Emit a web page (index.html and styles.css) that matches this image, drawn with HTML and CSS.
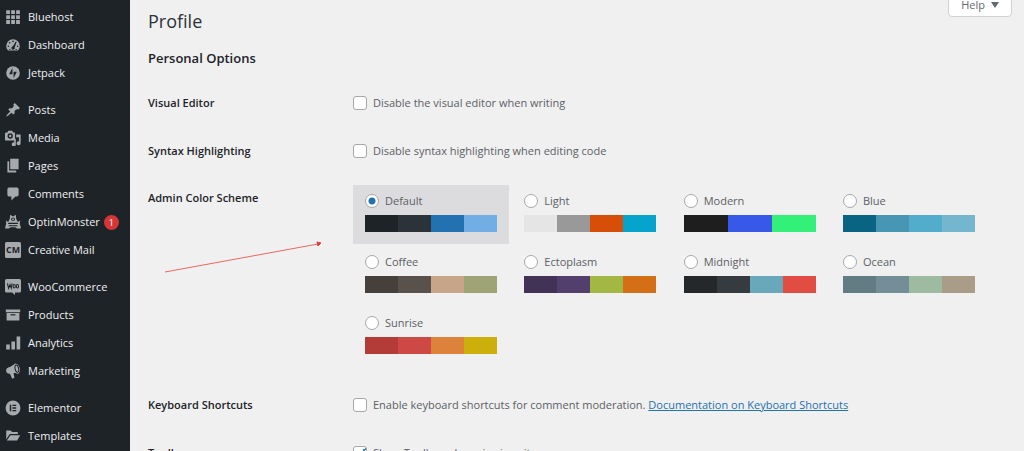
FILE: index.html
```
<!DOCTYPE html>
<html lang="en">

<head>
  <meta charset="UTF-8">
  <meta name="viewport" content="width=device-width, initial-scale=1.0">
  <title>Profile</title>
  <link rel="stylesheet" href="styles.css">
</head>

<body>
  <div class="wrap">
    <nav class="menu">
      <ul class="menu-group">
        <li><a href="#"><svg viewBox="0 0 20 20"><path d="M1.500 1.500h4.700v4.700H1.500zM7.700 1.500h4.700v4.700H7.700zM13.900 1.500h4.700v4.700h-4.700zM1.500 7.700h4.700v4.700H1.500zM7.700 7.700h4.700v4.700H7.700zM13.900 7.700h4.700v4.700h-4.700zM1.500 13.900h4.700v4.700H1.500zM7.700 13.900h4.700v4.700H7.700zM13.900 13.900h4.700v4.700h-4.700z"/></svg>Bluehost</a></li>
        <li><a href="#"><svg viewBox="0 0 20 20"><path d="M3.800 17h12.400c1.300-1.500 2.300-3.600 2.300-5.600A8.500 8.500 0 0 0 1.500 11.400c0 2 1 4.100 2.300 5.600z"/><g class="cut"><circle cx="10" cy="5.500" r="1"/><circle cx="5.800" cy="7.300" r="1"/><circle cx="4.200" cy="11.500" r="1"/><circle cx="15.800" cy="11.500" r="1"/><path d="M13.500 5.500l1 .6-2.300 6.700a2.200 2.200 0 1 1-2.300-1.300zM5 15h2v1H5zM13 15h2v1h-2z"/></g></svg>Dashboard</a></li>
        <li><a href="#"><svg viewBox="0 0 20 20"><circle cx="10" cy="10" r="8.500"/><path class="cut" d="M9.300 3.500v8H5.200zM10.700 16.500v-8h4.100z"/></svg>Jetpack</a></li>
      </ul>
      <ul class="menu-group">
        <li><a href="#"><svg viewBox="0 0 20 20"><path d="M10.440 3.020l1.820-1.820 6.360 6.350-1.830 1.820c-1.050-.680-2.480-.570-3.410.360l-.750.750c-.920.930-1.040 2.350-.350 3.410l-1.830 1.820-2.410-2.410-2.800 2.790c-.420.420-3.380 2.710-3.800 2.290s1.860-3.390 2.280-3.810l2.790-2.790L4.100 9.360l1.830-1.820c1.050.690 2.480.570 3.400-.360l.750-.750c.930-.920 1.050-2.350.360-3.410z"/></svg>Posts</a></li>
        <li><a href="#"><svg viewBox="0 0 20 20"><path d="M1 3h2l1-2h5l1 2h2.500v10H0V4zM14 5.500h5.500v11a2.500 2.500 0 1 1-2-2.300V9H14zM11.500 14v-3h2v7A2.500 2.500 0 1 1 11.500 15.500z"/><circle class="cut" cx="6.500" cy="7.500" r="3.300"/><circle cx="6.500" cy="7.500" r="1.500"/></svg>Media</a></li>
        <li><a href="#"><svg viewBox="0 0 20 20"><path d="M6.500 1H17v13H6.500zM3 4h2.200v11.500H14V18H3z"/></svg>Pages</a></li>
        <li><a href="#"><svg viewBox="0 0 20 20"><path d="M5 2h10a2 2 0 0 1 2 2v7a2 2 0 0 1-2 2h-2l-5 5v-5H5a2 2 0 0 1-2-2V4a2 2 0 0 1 2-2z"/></svg>Comments</a></li>
        <li><a href="#"><svg viewBox="0 0 20 20"><path d="M6 6l.5-5L10 3l3.500-2 .5 5 2 4 3-2-.5 4 1.500 6h-5l-2-1.500h-6L5 18H0l1.500-6L1 8l3 2z"/><path class="cut" d="M7.500 6.500a2.500 2 0 0 1 5 0 2.500 2 0 0 1-5 0zM4.500 11h11l1 1.500h-13zM5 14h10l1 1.300H4z"/><circle cx="10" cy="6.500" r="1.100"/></svg>OptinMonster<span class="badge">1</span></a></li>
        <li><a href="#"><svg viewBox="0 0 20 20"><rect width="20" height="20" rx="2"/><text class="cut cm" x="10" y="14" text-anchor="middle">CM</text></svg>Creative Mail</a></li>
      </ul>
      <ul class="menu-group">
        <li><a href="#"><svg viewBox="0 0 20 20"><path d="M2 0h16a2 2 0 0 1 2 2v13a2 2 0 0 1-2 2h-5.500v3L9 17H2a2 2 0 0 1-2-2V2a2 2 0 0 1 2-2z"/><path class="line" d="M3 5.500l1.500 6L6.300 7l1.500 4.500L9 5.500"/><ellipse class="line" cx="11.500" cy="9" rx="1.400" ry="2.200"/><ellipse class="line" cx="15.500" cy="9" rx="1.400" ry="2.200"/></svg>WooCommerce</a></li>
        <li><a href="#"><svg viewBox="0 0 20 20"><path d="M1 3h18v3.500H1zM2 7.500h16V17H2z"/><path class="cut" d="M7 9h6v1.500H7z"/></svg>Products</a></li>
        <li><a href="#"><svg viewBox="0 0 20 20"><path d="M1.500 12h4.500v6H1.500zM8 8h4.500v10H8zM14.500 2H19v16h-4.500z"/></svg>Analytics</a></li>
        <li><a href="#"><svg viewBox="0 0 20 20"><path d="M18.500 6.500c.6 3.500-.6 6.700-2.600 7-1.400.2-2.700-1.200-5.200-.8l1.100 5.800-2.900 1.100-2.700-6.200c-2 .5-4-.6-4.600-2.700C1 8 2.100 6.200 4.100 5.600 8 4.600 10 2.100 12.300.8c2.200-1 5.500 2.100 6.200 5.700z"/><ellipse class="line" cx="14.800" cy="7" rx="2.200" ry="4.600" transform="rotate(-14 14.800 7)"/></svg>Marketing</a></li>
      </ul>
      <ul class="menu-group">
        <li><a href="#"><svg viewBox="0 0 20 20"><circle cx="10" cy="10" r="9.300"/><path class="cut" d="M6 6h1.800v8H6zM9.300 6H14v1.600H9.300zM9.300 9.200H14v1.600H9.300zM9.300 12.400H14V14H9.300z"/></svg>Elementor</a></li>
        <li><a href="#"><svg viewBox="0 0 20 20"><path d="M1.500 3h5.500l2 2h7v2.500H6L1.500 14zM6.800 9H19l-3.800 6.500H2.200z"/></svg>Templates</a></li>
      </ul>
    </nav>

    <main class="content">
      <button class="help" type="button">Help <span class="caret"></span></button>
      <h1>Profile</h1>
      <h2>Personal Options</h2>

      <form class="form">
        <div class="row">
          <div class="row-title">Visual Editor</div>
          <label class="check"><input type="checkbox">Disable the visual editor when writing</label>
        </div>
        <div class="row">
          <div class="row-title">Syntax Highlighting</div>
          <label class="check"><input type="checkbox">Disable syntax highlighting when editing code</label>
        </div>
        <div class="row row-schemes">
          <div class="row-title">Admin Color Scheme</div>
          <div class="schemes"></div>
        </div>
        <div class="row">
          <div class="row-title">Keyboard Shortcuts</div>
          <div class="check"><input type="checkbox" id="shortcuts"><label for="shortcuts">Enable keyboard shortcuts for comment moderation.</label>&nbsp;<a href="#">Documentation on Keyboard Shortcuts</a></div>
        </div>
        <div class="row">
          <div class="row-title">Toolbar</div>
          <label class="check"><input type="checkbox" checked>Show Toolbar when viewing site</label>
        </div>
      </form>

      <svg class="arrow" viewBox="0 0 160 34"><path d="M1 31L154 3"/><path class="head" d="M153 1l4 1-3 3z"/></svg>
    </main>
  </div>

  <script>
    const schemes = [
      ['Default', ['#1d2327', '#2c3338', '#2271b1', '#72aee6']],
      ['Light', ['#e5e5e5', '#999999', '#d64e07', '#04a4cc']],
      ['Modern', ['#1e1e1e', '#3858e9', '#33f078']],
      ['Blue', ['#096484', '#4796b3', '#52accc', '#74b6ce']],
      ['Coffee', ['#46403c', '#59524c', '#c7a589', '#9ea476']],
      ['Ectoplasm', ['#413256', '#523f6d', '#a3b745', '#d46f15']],
      ['Midnight', ['#25282b', '#363b3f', '#69a8bb', '#e14d43']],
      ['Ocean', ['#627c83', '#738e96', '#9ebaa0', '#aa9d88']],
      ['Sunrise', ['#b43c38', '#cf4944', '#dd823b', '#ccaf0b']]
    ]
    const box = document.querySelector('.schemes')
    schemes.forEach(([name, colors], i) => {
      const bars = colors.map(c => `<span style="background:${c}"></span>`).join('')
      box.innerHTML += `<label class="scheme"><span class="scheme-name"><input type="radio" name="scheme"${i == 0 ? ' checked' : ''}>${name}</span><span class="palette">${bars}</span></label>`
    })
  </script>
</body>

</html>
```
FILE: styles.css
```
* {
  box-sizing: border-box;
}
body {
  margin: 0;
  background: #f0f0f0;
  color: #5b6065;
  font: 11px/18px "Open Sans", "Noto Sans", sans-serif;
}
.wrap {
  display: flex;
  height: 100vh;
  overflow: hidden;
}

/* side menu */
.menu {
  flex: none;
  width: 130px;
  padding-top: 3px;
  background: #1d2327;
}
.menu-group {
  margin: 0 0 9px;
  padding: 0;
  list-style: none;
}
.menu a {
  display: flex;
  align-items: center;
  height: 28px;
  padding-left: 5px;
  color: #f0f0f1;
  text-decoration: none;
  white-space: nowrap;
}
.menu svg {
  flex: none;
  width: 16px;
  height: 16px;
  margin-right: 7px;
  fill: #a7aaad;
}
.menu .cut {
  fill: #1d2327;
}
.menu .line {
  fill: none;
  stroke: #1d2327;
  stroke-width: 1.3;
}
.menu .cm {
  font-size: 11px;
  font-weight: 700;
}
.badge {
  width: 15px;
  height: 15px;
  margin-left: 4px;
  border-radius: 50%;
  background: #d63638;
  color: #fff;
  font-size: 9px;
  line-height: 15px;
  text-align: center;
}

/* content */
.content {
  position: relative;
  flex: 1;
  padding: 6px 12px 0 18px;
}
h1 {
  margin: 0;
  color: #2c3338;
  font-size: 18px;
  font-weight: 400;
  line-height: 30px;
}
h2 {
  margin: 12px 0 11px;
  color: #1d2327;
  font-size: 13px;
  font-weight: 600;
  line-height: 20px;
}
.help {
  float: right;
  display: flex;
  align-items: center;
  gap: 6px;
  height: 24px;
  margin-top: -13px;
  padding: 0 12px;
  border: 1px solid #d0d1d4;
  border-radius: 0 0 4px 4px;
  background: #fff;
  color: #646970;
  font: inherit;
}
.caret {
  border: 4px solid transparent;
  border-top: 6px solid #646970;
  border-bottom: 0;
}
.row {
  display: grid;
  grid-template-columns: 205px 1fr;
  padding: 15px 0;
}
.row-schemes {
  padding-top: 10px;
}
.row-schemes .row-title {
  padding-top: 4px;
}
.row-title {
  color: #1d2327;
  font-weight: 600;
}
.check {
  display: flex;
  align-items: center;
}
.content a {
  color: #2271b1;
}
input {
  flex: none;
  width: 14px;
  height: 14px;
  margin: 0 6px 0 0;
  border: 1px solid #a5a7ab;
  border-radius: 3px;
  appearance: none;
  background: #fff;
}
input[type="radio"] {
  border-radius: 50%;
}
input[type="radio"]:checked {
  background: radial-gradient(#2271b1 3px, #fff 4px);
}
input[type="checkbox"]:checked {
  background: linear-gradient(135deg, #fff 50%, #3582c4 50%, #3582c4 60%, #fff 60%);
}

/* colour schemes */
.schemes {
  display: grid;
  grid-template-columns: repeat(4, 156px);
  justify-content: space-between;
  gap: 2px 0;
  max-width: 634px;
}
.scheme {
  padding: 7px 12px 12px;
}
.scheme:has(:checked) {
  background: #dcdcde;
}
.scheme-name {
  display: flex;
  align-items: center;
  height: 18px;
  margin-bottom: 5px;
}
.palette {
  display: flex;
  height: 17px;
}
.palette span {
  flex: 1;
}

.arrow {
  position: absolute;
  top: 241px;
  left: 34px;
  width: 160px;
  height: 34px;
  fill: none;
  stroke: #e8695f;
}
.arrow .head {
  fill: #e03c31;
  stroke: #e03c31;
}
```
